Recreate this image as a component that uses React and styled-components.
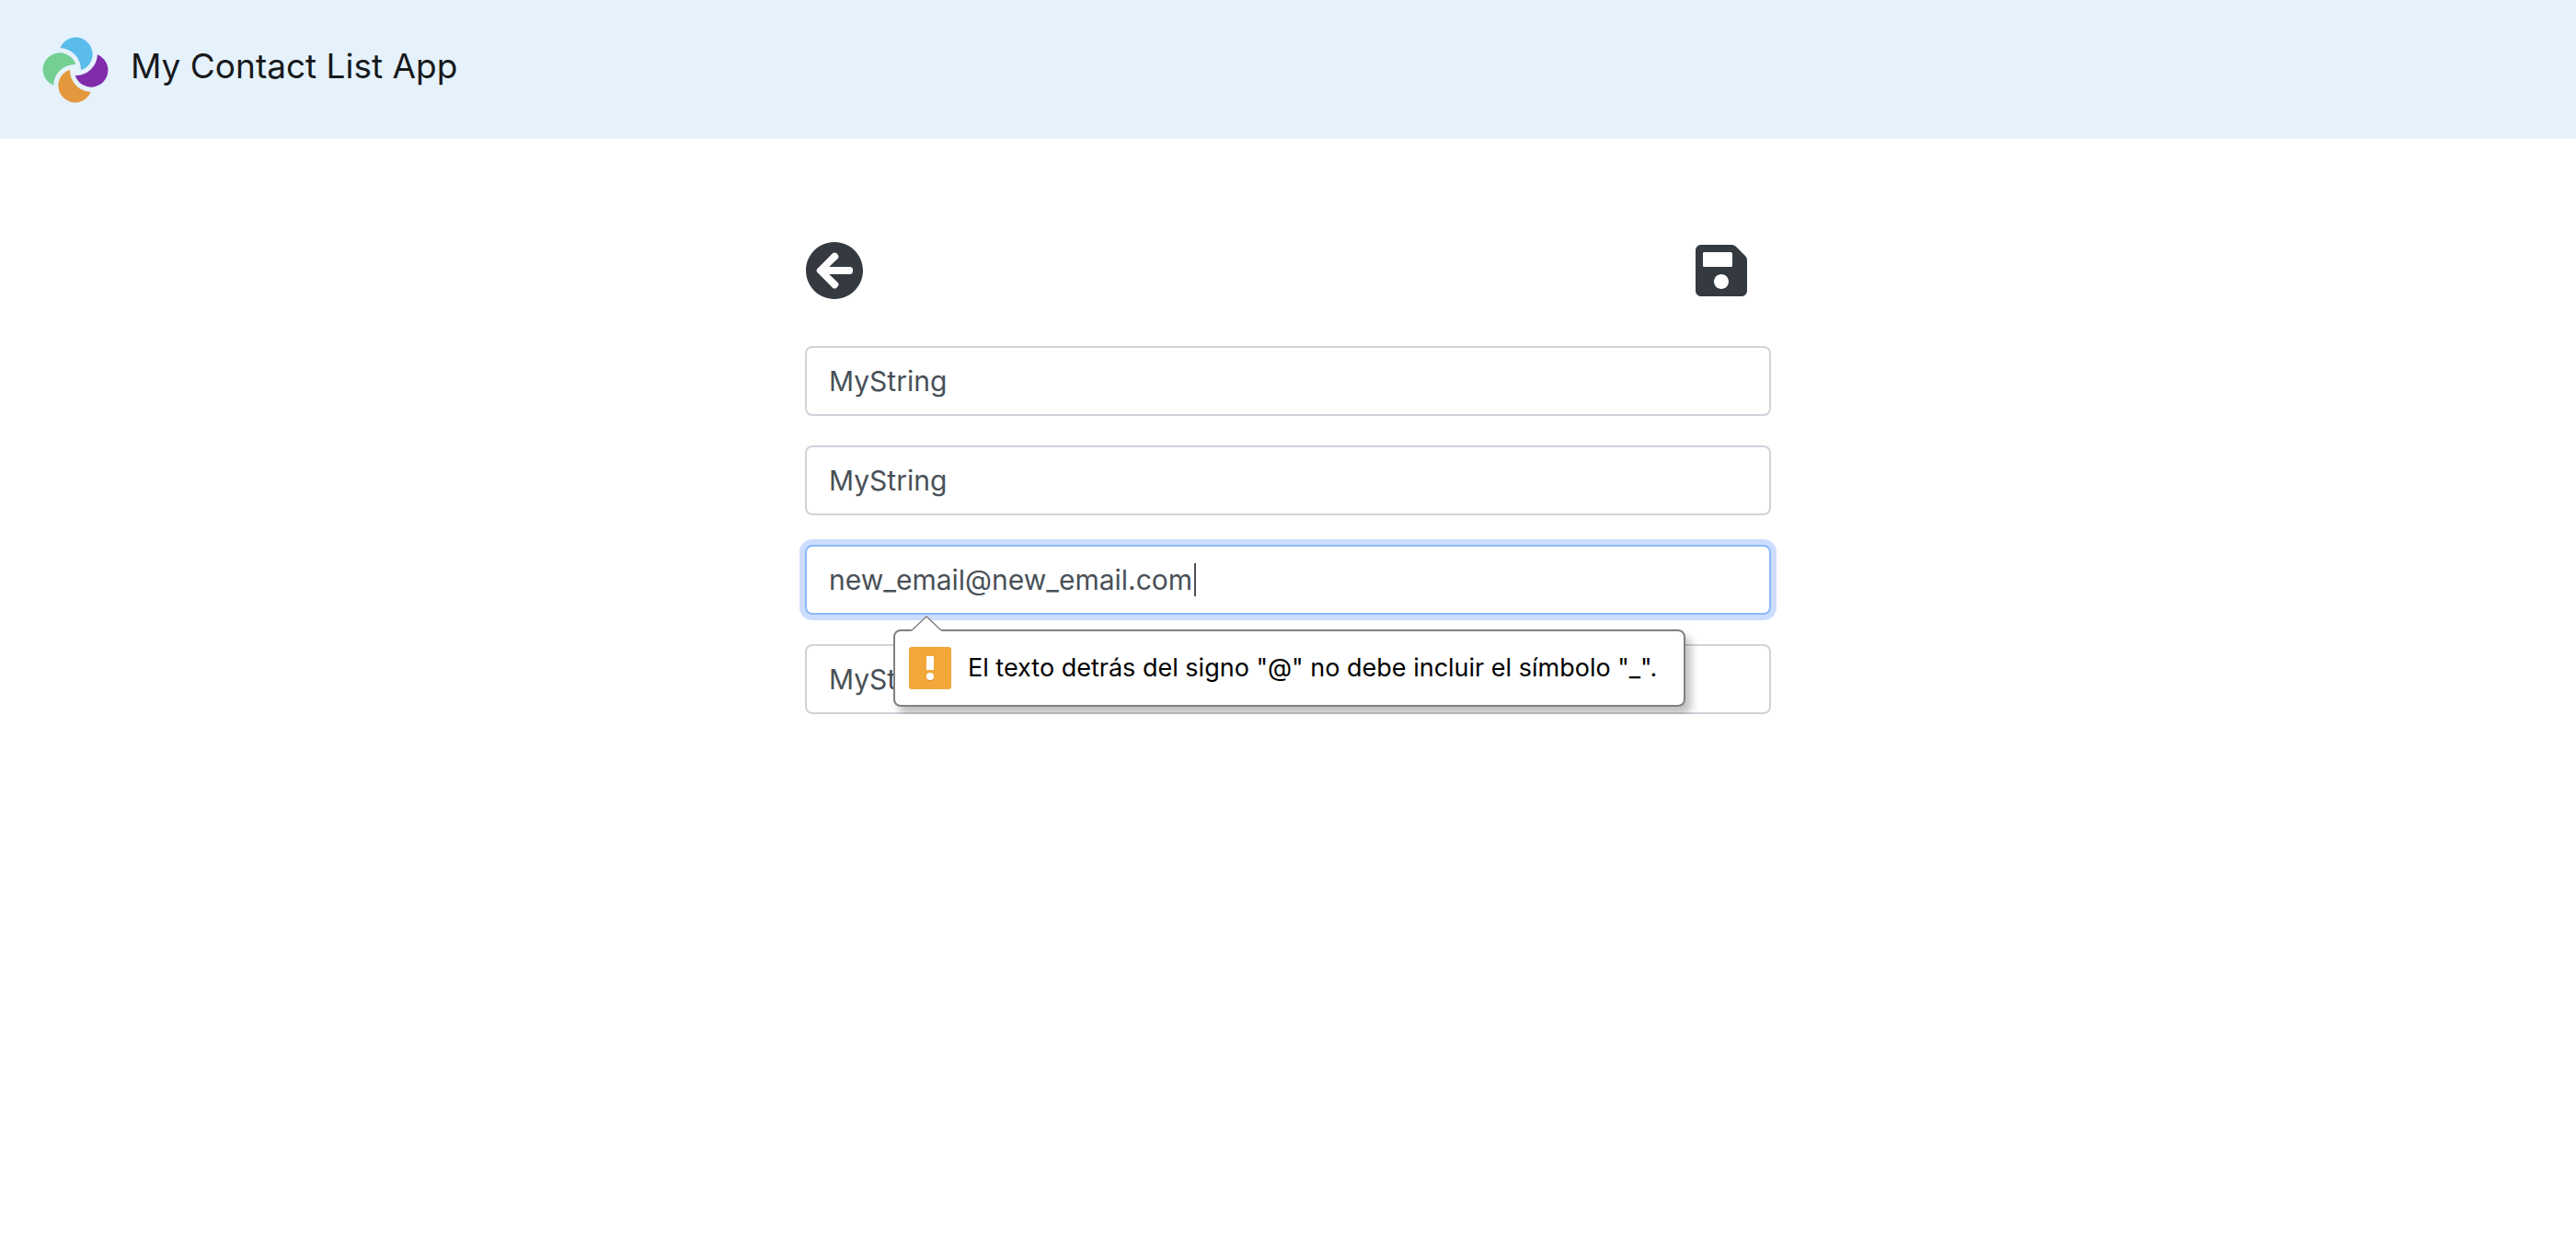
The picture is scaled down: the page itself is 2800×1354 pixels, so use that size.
import React from "react";
import styled, { createGlobalStyle } from "styled-components";
import { FaArrowCircleLeft, FaSave } from "react-icons/fa";

const GlobalStyle = createGlobalStyle`
  *, *::before, *::after { box-sizing: border-box; }
  body {
    margin: 0;
    background: #fff;
    color: #212529;
    font-family: Inter, "Liberation Sans", sans-serif;
    font-size: 32px;
    line-height: 48px;
  }
`;

const Header = styled.header`
  display: flex;
  align-items: flex-start;
  gap: 24px;
  padding: 40px 46px 39px;
  background: #e5f2fc;
`;

const Logo = styled.svg`
  width: 72px;
  height: 72px;
`;

const Title = styled.h1`
  margin: 0;
  padding-top: 2px;
  color: #17191b;
  font-size: 37px;
  font-weight: 400;
  line-height: 60px;
`;

const Main = styled.main`
  width: 37.5%;
  margin: 0 auto;
  padding-top: 111px;
`;

const Toolbar = styled.div`
  display: flex;
  justify-content: space-between;
  padding-right: 22px;
  margin-bottom: 50px;
`;

const IconButton = styled.button`
  display: flex;
  padding: 0;
  border: 0;
  background: none;
  color: #343a40;
  font-size: 64px;
  cursor: pointer;
`;

const Form = styled.form`
  display: flex;
  flex-direction: column;
  gap: 32px;
`;

const Field = styled.div`
  position: relative;
`;

const Input = styled.input`
  display: block;
  width: 100%;
  height: 76px;
  padding: 12px 24px;
  border: 2px solid ${(p) => (p.$active ? "#8bb9fa" : "#ced4da")};
  border-radius: 8px;
  outline: 0;
  background: #fff;
  box-shadow: ${(p) => (p.$active ? "0 0 0 6px #cdddfe" : "none")};
  caret-color: transparent;
  color: #495057;
  font: inherit;
  font-size: 30px;
`;

const Caret = styled.span`
  position: absolute;
  top: 20px;
  left: 423px;
  width: 2px;
  height: 36px;
  background: #495057;
`;

const Tooltip = styled.div`
  position: absolute;
  z-index: 1;
  top: 92px;
  left: 96px;
  display: flex;
  align-items: center;
  gap: 18px;
  width: 861px;
  height: 84px;
  padding: 0 15px;
  border: 2px solid #808080;
  border-radius: 8px;
  background: #fff;
  box-shadow: 6px 8px 10px rgba(0, 0, 0, 0.25);
  color: #000;
  font-size: 27px;
  line-height: 36px;
  white-space: nowrap;
`;

const Pointer = styled.svg`
  position: absolute;
  top: -17px;
  left: 17px;
  width: 34px;
  height: 18px;
`;

const Warning = styled.svg`
  flex: none;
  width: 46px;
  height: 46px;
`;

const petals = [
  { color: "#5bbceb", angle: 0 },
  { color: "#812cab", angle: 90 },
  { color: "#e4983d", angle: 180 },
  { color: "#74cf93", angle: 270 },
];

const fields = [
  { id: "first", label: "Nombre", type: "text", value: "MyString" },
  { id: "last", label: "Apellido", type: "text", value: "MyString" },
  {
    id: "email",
    label: "Email",
    type: "email",
    value: "new_email@new_email.com",
    error: 'El texto detrás del signo "@" no debe incluir el símbolo "_".',
  },
  { id: "phone", label: "Teléfono", type: "text", value: "MyString" },
];

export default function App() {
  return (
    <>
      <GlobalStyle />
      <Header>
        <Logo viewBox="-108 -108 216 216" aria-hidden="true">
          {petals.map((p) => (
            <path
              key={p.angle}
              d="M-50 -72A55 55 0 1 1 18 1A71 71 0 0 0 -50 -72Z"
              fill={p.color}
              transform={`rotate(${p.angle})`}
            />
          ))}
        </Logo>
        <Title>My Contact List App</Title>
      </Header>
      <Main>
        <Toolbar>
          <IconButton type="button" aria-label="Volver">
            <FaArrowCircleLeft />
          </IconButton>
          <IconButton type="submit" form="contact" aria-label="Guardar">
            <FaSave />
          </IconButton>
        </Toolbar>
        <Form id="contact" noValidate>
          {fields.map((f) => (
            <Field key={f.id}>
              <Input
                id={f.id}
                aria-label={f.label}
                aria-describedby={f.error ? `${f.id}-error` : undefined}
                type={f.type}
                defaultValue={f.value}
                $active={Boolean(f.error)}
              />
              {f.error && (
                <>
                  <Caret />
                  <Tooltip id={`${f.id}-error`} role="alert">
                    <Pointer viewBox="0 0 34 18" aria-hidden="true">
                      <path d="M0 18L1 16L17 1L33 16L34 18Z" fill="#fff" />
                      <path d="M1 16L17 1L33 16" fill="none" stroke="#808080" strokeWidth="1.4" />
                    </Pointer>
                    <Warning viewBox="0 0 46 46" aria-hidden="true">
                      <rect width="46" height="46" rx="3" fill="#f2a73b" />
                      <rect x="19" y="10" width="8" height="15" fill="#fff" />
                      <circle cx="23" cy="33" r="4" fill="#e58a34" />
                      <circle cx="23" cy="32" r="4" fill="#fff" />
                    </Warning>
                    <span>{f.error}</span>
                  </Tooltip>
                </>
              )}
            </Field>
          ))}
        </Form>
      </Main>
    </>
  );
}
